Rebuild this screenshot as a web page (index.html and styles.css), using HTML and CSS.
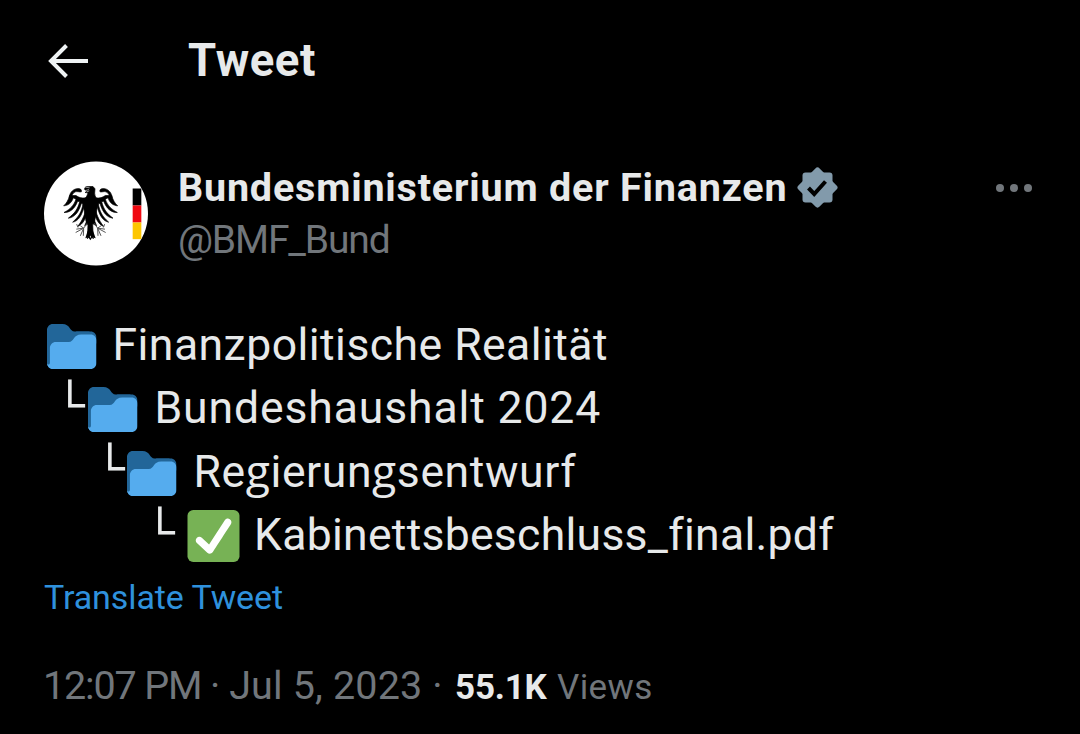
FILE: index.html
```html
<!DOCTYPE html>
<html lang="en">
<head>
<meta charset="utf-8">
<title>Tweet</title>
<link rel="stylesheet" href="styles.css">
</head>
<body>
<svg class="defs" width="0" height="0" aria-hidden="true">
  <symbol id="folder" viewBox="0 3 34 30" preserveAspectRatio="none">
    <path fill="#269" d="M0 29c0 2.209 1.791 4 4 4h24c2.209 0 4-1.791 4-4V12c0-2.209-1.791-4-4-4h-9c-3.562 0-3-5-8.438-5H4C1.791 3 0 4.791 0 7v22z"/>
    <path fill="#269" d="M20 8h10c2.200 0 4 1.800 4 4v4H20z"/>
    <path fill="#55ACEE" d="M30 10h-6.562C18 10 18.562 15 15 15H6c-2.209 0-4 1.791-4 4v10c0 .553-.448 1-1 1s-1-.447-1-1c0 2.209 1.791 4 4 4h26c2.209 0 4-1.791 4-4V14c0-2.209-1.791-4-4-4z"/>
  </symbol>
</svg>
<header class="topbar">
  <svg class="back" viewBox="0 0 40 34"><path d="M18.500 1.500L3 17l15.500 15.500M3 17h37"/></svg>
  <h1 class="title">Tweet</h1>
</header>
<main class="tweet">
  <section class="author">
    <svg class="avatar" viewBox="25 35 312 312">
      <circle cx="181" cy="191" r="156" fill="#fff"/>
      <path fill="#000" d="M291 116h26v51h-26z"/>
      <path fill="#f00a12" d="M291 167h26v51h-26z"/>
      <path fill="#fdc600" d="M291 218h26v50h-26z"/>
      <g id="wing">
        <path class="feathers" d="M137 126c3-9-8-12-19-8-12 5-18 17-17 29l5 4c1-13 5-22 13-25 7-2 10 1 18 0z"/>
        <path class="feathers" d="M102 137c-4 14-10 24-18 31 14-1 24-9 29-24l8 4c-6 18-17 30-36 40 19 0 32-11 41-34l6 2c-6 22-15 35-34 49 18-2 31-17 39-44l5 1c-4 24-12 38-31 55 17-3 28-20 35-49l5 2c-2 22-9 39-25 60 17-7 25-25 29-48l2 22-10 24 13-7 5-71c-7-4-10-6-16-6-11 2-20-1-28-7z"/>
        <path class="claw" d="M155 220l-11 15-22 3m22-3l-24 13m24-13l-10 23m10-23l-1 23m1-23l-10-7m-7 5l-4-10"/>
      </g>
      <use href="#wing" transform="matrix(-1 0 0 1 330 0)"/>
      <path class="feathers" d="M158 110h14l6 7-1 13c0 12 9 17 10 30l-10 54-6 8 2 45-9-10-9 10 2-45-6-8-9-54c0-12 12-15 15-31l-9-1 6-4-8-6 4-7z"/>
      <path class="beak" d="M149 112l13 2m-12 8l10-3m-7 7l8-3"/>
      <path d="M149 265l7-22 8 22 8-22 8 22-10-3-6 9-6-9z"/>
    </svg>
    <div class="names">
      <div class="name"><span class="t-name">Bundesministerium der Finanzen</span>
        <svg class="badge" viewBox="0 0 41 41"><g fill="#829aab"><rect x="5.500" y="5.500" width="30" height="30" rx="3"/><rect x="5.500" y="5.500" width="30" height="30" rx="3" transform="rotate(45 20.500 20.500)"/></g><path d="M11.500 21l5.700 6L28.500 14.500" fill="none" stroke="#000" stroke-width="4"/></svg>
      </div>
      <div class="handle"><span class="t-handle">@BMF_Bund</span></div>
    </div>
    <svg class="more" viewBox="0 0 36 8"><circle cx="4" cy="4" r="4"/><circle cx="18" cy="4" r="4"/><circle cx="32" cy="4" r="4"/></svg>
  </section>
  <section class="tree">
    <div class="row row-1"><svg class="folder"><use href="#folder"/></svg><span class="t-1">Finanzpolitische Realität</span></div>
    <div class="row row-2"><span class="corner">└</span><svg class="folder"><use href="#folder"/></svg><span class="t-2">Bundeshaushalt 2024</span></div>
    <div class="row row-3"><span class="corner">└</span><svg class="folder"><use href="#folder"/></svg><span class="t-3">Re<span class="g">g</span>ierun<span class="g">g</span>sentwurf</span></div>
    <div class="row row-4"><span class="corner">└</span><svg class="check" viewBox="0 0 36 36"><rect width="36" height="36" rx="4" fill="#77B255"/><path fill="#fff" d="M29.280 6.362c-1.156-.751-2.704-.422-3.458.736L14.936 23.877l-5.029-4.650c-1.014-.938-2.596-.875-3.533.138-.937 1.014-.875 2.596.139 3.533l7.209 6.666c.480.445 1.090.665 1.696.665.673 0 1.534-.282 2.099-1.139.332-.506 12.500-19.270 12.500-19.270.751-1.158.421-2.707-.737-3.458z"/></svg><span class="t-4">Kabinettsbeschluss_final.pdf</span></div>
  </section>
  <a class="translate">Translate Tweet</a>
  <footer class="meta"><span class="date"><span class="time">12:07 PM ·</span> Jul 5, 2023 ·</span><b class="count">55.1K</b><span class="views">Views</span></footer>
</main>
</body>
</html>
```
FILE: styles.css
```css
* { box-sizing: border-box; }
body {
  margin: 0;
  height: 734px;
  overflow: hidden;
  background: #000;
  color: #e7e9ea;
  font-family: Roboto, "Open Sans", sans-serif;
  white-space: nowrap;
}
svg { display: block; flex: none; }
.defs { position: absolute; }
.topbar { display: flex; align-items: center; height: 122px; padding-left: 48px; }
.back { width: 40px; height: 34px; fill: none; stroke: #eff3f4; stroke-width: 4; }
.title { margin: 0 0 0 100px; font-size: 45.500px; line-height: 60px; font-weight: 700; letter-spacing: .6px; }
.tweet { padding: 39px 44px 0; }
.author { display: flex; height: 152px; }
.avatar { width: 104px; height: 105px; margin-left: -.5px; }
.feathers { stroke: #000; stroke-width: 2; stroke-linejoin: round; }
.claw { fill: none; stroke: #555; stroke-width: 3; }
.beak { fill: none; stroke: #ddd; stroke-width: 2; }
.names { margin-left: 30.500px; flex: 1; }
.name, .handle { display: flex; align-items: center; height: 52px; line-height: 52px; font-size: 39px; }
.name { font-weight: 700; font-size: 39.500px; }
.t-name { width: 618.500px; letter-spacing: .8px; margin-top: 1px; }
.handle { color: #71767b; letter-spacing: -1.150px; padding-top: 1px; }
.more { width: 36px; height: 8px; margin: 23px 4px 0 0; fill: #71767b; }
.badge { width: 41px; height: 41px; }
.tree { font-size: 44.500px; }
.row { display: flex; align-items: center; height: 63.330px; line-height: 63.330px; }
.folder { width: 49.500px; height: 45px; margin-top: 4px; }
.check { width: 53px; height: 52px; margin-top: 2px; }
.row-1 { padding-left: 3px; }
.row-2 { padding-left: 11px; }
.row-3 { padding-left: 51px; }
.row-4 { padding-left: 101px; }
.corner { width: 33px; font: 50px/48px "Liberation Mono", monospace; }
.row-3 .corner { width: 32px; }
.row-4 .corner { width: 42px; }
.t-1, .t-2, .t-3, .t-4 { margin: 2px 0 0 16px; }
.t-1 { letter-spacing: .47px; }
.t-2 { margin-left: 17px; letter-spacing: .88px; }
.t-3 { margin-left: 17px; letter-spacing: .6px; }
.t-4 { margin-left: 14px; letter-spacing: .28px; }
.g { font-family: "Open Sans", sans-serif; line-height: 1; }
.translate { display: block; height: 62px; line-height: 62px; font-size: 34px; letter-spacing: -.1px; color: #2f91dc; }
.meta { display: flex; align-items: baseline; color: #71767b; padding-top: 28px; line-height: 60px; }
.date { width: 412px; margin-left: -1px; font-size: 39.500px; letter-spacing: .15px; }
.time { letter-spacing: -1.150px; }
.count { width: 102px; font-size: 35px; color: #e7e9ea; letter-spacing: -.2px; }
.views { font-size: 35px; letter-spacing: .4px; }
```
